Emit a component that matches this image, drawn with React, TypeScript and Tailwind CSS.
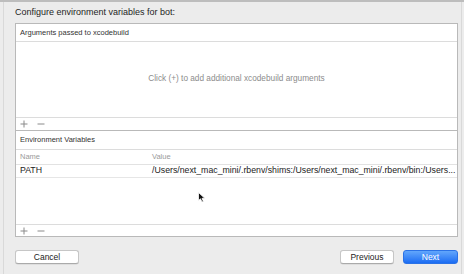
import React from 'react';

const PlusMinus: React.FC = () => (
  <div className="flex items-center h-full pl-[4px] gap-[9px] text-[#8a8a8a]">
    <svg width="8" height="8" viewBox="0 0 8 8">
      <path d="M4 0.5V7.5M0.5 4H7.5" stroke="currentColor" strokeWidth="1" />
    </svg>
    <svg width="8" height="8" viewBox="0 0 8 8">
      <path d="M0.5 4H7.5" stroke="currentColor" strokeWidth="1" />
    </svg>
  </div>
);

const Cursor: React.FC = () => (
  <svg width="8" height="11" viewBox="0 0 8 11" className="absolute left-[198px] top-[190px]">
    <path d="M0.5 0.5L0.5 8.5L2.5 6.8L4 10L5.4 9.4L4 6.3L6.8 6.3Z" fill="#111" stroke="#fff" strokeWidth="0.8" />
  </svg>
);

export default function App() {
  const pathValue = '/Users/next_mac_mini/.rbenv/shims:/Users/next_mac_mini/.rbenv/bin:/Users...';

  return (
    <div className="relative w-[464px] h-[274px] overflow-hidden bg-[#ececec] border-t-2 border-[#bdbdbd] font-['Liberation_Sans',Arial,sans-serif] text-[#222]">
      <div className="ml-[3px] w-[459px] h-full border-l border-r border-[#d9d9d9] flex flex-col">
        {/* Title */}
        <div className="h-[21px] flex items-center pl-[11px] text-[9px] text-[#1e1e1e]">
          Configure environment variables for bot:
        </div>

        {/* Table box */}
        <div className="ml-[11px] w-[443px] border border-[#b9b9b9] bg-white flex flex-col">
          <div className="h-[18px] border-b border-[#dcdcdc] flex items-center pl-[4px] text-[7.5px] text-[#333]">
            Arguments passed to xcodebuild
          </div>
          <div className="h-[75px] flex items-center justify-center text-[8.25px] text-[#8c8c8c]">
            Click (+) to add additional xcodebuild arguments
          </div>
          <div className="h-[14px] border-t border-[#dcdcdc] border-b border-b-[#b9b9b9]">
            <PlusMinus />
          </div>

          <div className="h-[19px] border-b border-[#dcdcdc] flex items-center pl-[4px] text-[7.5px] text-[#333]">
            Environment Variables
          </div>
          <div className="h-[15px] border-b border-[#e2e2e2] flex items-center text-[7.5px] text-[#9a9a9a]">
            <div className="w-[136px] pl-[4px]">Name</div>
            <div>Value</div>
          </div>
          <div className="h-[13px] border-b border-[#e6e6e6] flex items-center text-[8.75px] text-[#222]">
            <div className="w-[136px] pl-[4px]">PATH</div>
            <div className="whitespace-nowrap">{pathValue}</div>
          </div>
          <div className="h-[46px]" />
          <div className="h-[12px] border-t border-[#dcdcdc]">
            <PlusMinus />
          </div>
        </div>

        {/* Buttons */}
        <div className="ml-[11px] w-[443px] mt-[13px] flex items-center text-[8.5px]">
          <button className="w-[64px] h-[14px] bg-white border border-[#c6c6c6] border-b-[#aaaaaa] rounded-[3px] shadow-[0_0.5px_0.5px_rgba(0,0,0,0.12)] text-[#222]">
            Cancel
          </button>
          <div className="flex-1" />
          <button className="w-[54px] h-[14px] bg-white border border-[#c6c6c6] border-b-[#aaaaaa] rounded-[3px] shadow-[0_0.5px_0.5px_rgba(0,0,0,0.12)] text-[#222]">
            Previous
          </button>
          <button className="ml-[9px] w-[55px] h-[14px] bg-linear-to-b from-[#62a6fb] to-[#1b6cf3] border border-[#2b72e6] rounded-[3px] text-white">
            Next
          </button>
        </div>
      </div>
      <Cursor />
    </div>
  );
}
